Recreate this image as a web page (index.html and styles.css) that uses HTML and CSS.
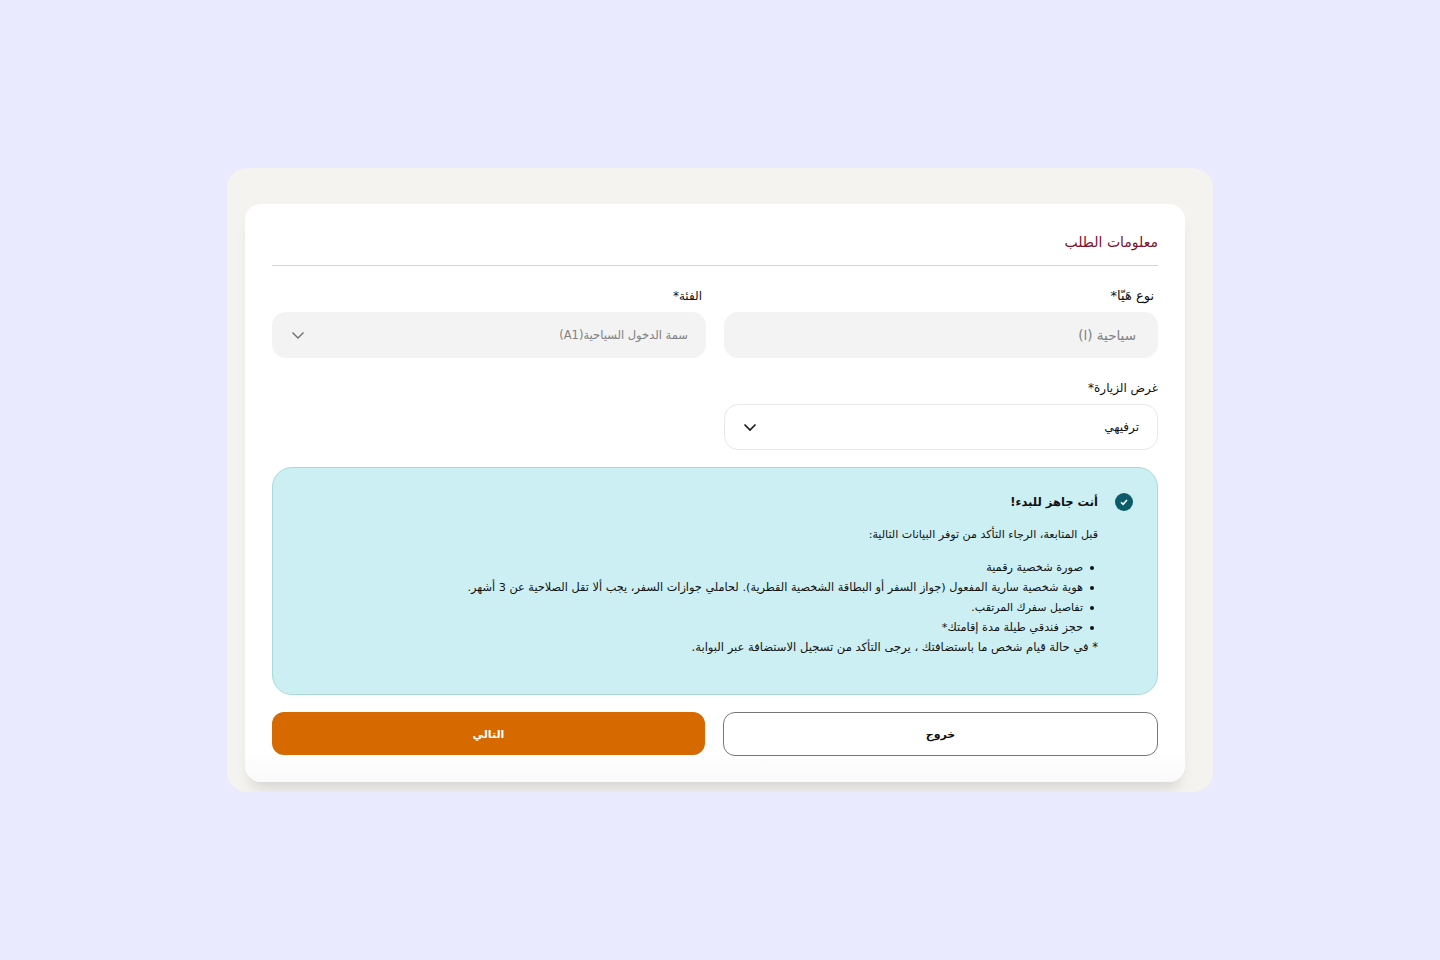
FILE: index.html
```html
<!DOCTYPE html>
<html lang="ar" dir="rtl">
<head>
    <meta charset="UTF-8">
    <meta name="viewport" content="width=device-width, initial-scale=1.0">
    <title>معلومات الطلب</title>
    <link rel="stylesheet" href="styles.css">
</head>
<body>
    <div class="outer-card">
        <div class="form-card">
            <h1 class="section-title">معلومات الطلب</h1>

            <div class="field-grid">
                <div class="field">
                    <label class="field-label label-inset label-wide">نوع هَيّا*</label>
                    <div class="input input-disabled input-type"><span>سياحية (ا)</span></div>
                </div>
                <div class="field">
                    <label class="field-label label-inset">الفئة*</label>
                    <div class="input input-disabled input-category">
                        <span>سمة الدخول السياحية(A1)</span>
                        <svg class="chevron" width="14" height="14" viewBox="0 0 14 14"><path d="M1.5 4.5 7 10l5.5-5.5" fill="none" stroke="#6f6f6f" stroke-width="1.4"/></svg>
                    </div>
                </div>
                <div class="field">
                    <label class="field-label">غرض الزيارة*</label>
                    <div class="input input-active">
                        <span>ترفيهي</span>
                        <svg class="chevron" width="14" height="14" viewBox="0 0 14 14"><path d="M1.5 4.5 7 10l5.5-5.5" fill="none" stroke="#1c1c1c" stroke-width="1.7"/></svg>
                    </div>
                </div>
            </div>

            <div class="notice">
                <div class="notice-head">
                    <svg class="notice-icon" width="18" height="18" viewBox="0 0 18 18"><circle cx="9" cy="9" r="9" fill="#0b5c68"/><path d="M6 9.2 8.1 11.3 12 7" fill="none" stroke="#fff" stroke-width="1.5"/></svg>
                    <h2 class="notice-title">أنت جاهز للبدء!</h2>
                </div>
                <div class="notice-body">
                    <p class="notice-intro">قبل المتابعة، الرجاء التأكد من توفر البيانات التالية:</p>
                    <ul class="notice-list">
                        <li>صورة شخصية رقمية</li>
                        <li>هوية شخصية سارية المفعول (جواز السفر أو البطاقة الشخصية القطرية). لحاملي جوازات السفر، يجب ألا تقل الصلاحية عن 3 أشهر.</li>
                        <li class="item-tight">تفاصيل سفرك المرتقب.</li>
                        <li>حجز فندقي طيلة مدة إقامتك*</li>
                    </ul>
                    <p class="notice-foot">* في حالة قيام شخص ما باستضافتك ، يرجى التأكد من تسجيل الاستضافة عبر البوابة.</p>
                </div>
            </div>

            <div class="actions">
                <div class="button button-outline">خروج</div>
                <div class="button button-primary">التالي</div>
            </div>
        </div>
    </div>
</body>
</html>
```

FILE: styles.css
```css
* {
    margin: 0;
    padding: 0;
    box-sizing: border-box;
    font-family: 'DejaVu Sans', 'Noto Sans', sans-serif;
}

body {
    background-color: #E9EAFE;
    height: 100vh;
    display: flex;
    align-items: center;
    justify-content: center;
    overflow: hidden;
}

.outer-card {
    width: 986px;
    height: 624px;
    padding: 36px 28px 10px 18px;
    background-color: #F5F3F0;
    border-radius: 20px;
    overflow: hidden;
}

.form-card {
    height: 578px;
    padding: 27px 27px 0;
    background: linear-gradient(to bottom, #fff 94%, #FAFAFA 100%);
    border-radius: 16px;
    box-shadow: 0 12px 14px -6px rgba(90, 88, 90, 0.2);
}

.section-title {
    height: 35px;
    border-bottom: 1px solid #D6D6D6;
    color: #7A1230;
    font-size: 14px;
    font-weight: normal;
    line-height: 22px;
}

.field-grid {
    display: grid;
    grid-template-columns: 434px 434px;
    column-gap: 18px;
    row-gap: 20px;
    margin-top: 20px;
}

.field-label {
    display: block;
    height: 26px;
    font-size: 12px;
    line-height: 20px;
    color: #111;
}

.label-inset {
    padding-right: 4px;
}

.label-wide {
    font-size: 13px;
}

.input {
    height: 46px;
    border-radius: 14px;
    display: flex;
    align-items: center;
    justify-content: space-between;
    font-size: 12px;
}

.input-disabled {
    background-color: #F3F3F3;
    color: #808080;
}

.input-type {
    padding: 0 22px 0 18px;
    font-size: 13.5px;
}

.input-category {
    padding: 0 18px 0 19px;
    font-size: 11.5px;
}

.input-active {
    background-color: #fff;
    border: 1px solid #E8E8E8;
    color: #111;
    padding: 0 18px;
}

.notice {
    height: 228px;
    margin-top: 17px;
    padding: 24px 24px 0;
    background-color: #CCEFF3;
    border: 1px solid #A8DADA;
    border-radius: 20px;
}

.notice-head {
    display: flex;
    align-items: center;
    gap: 17px;
}

.notice-title {
    font-size: 11.5px;
    font-weight: bold;
    line-height: 20px;
    color: #111;
}

.notice-body {
    padding-right: 35px;
    color: #111;
}

.notice-intro {
    margin-top: 13px;
    font-size: 11.1px;
    line-height: 20px;
}

.notice-list {
    list-style: none;
    margin-top: 12.5px;
    padding-right: 4px;
    font-size: 11.3px;
    line-height: 20.2px;
}

.notice-list li {
    display: flex;
    align-items: center;
    gap: 7px;
}

.notice-list li::before {
    content: "";
    width: 4px;
    height: 4px;
    border-radius: 50%;
    background-color: #111;
}

.notice-list .item-tight {
    font-size: 11px;
}

.notice-foot {
    margin-top: -1px;
    font-size: 11.55px;
    line-height: 20px;
}

.actions {
    display: grid;
    grid-template-columns: 435px 433px;
    column-gap: 18px;
    margin-top: 17px;
}

.button {
    height: 44px;
    border-radius: 12px;
    display: flex;
    align-items: center;
    justify-content: center;
    font-size: 11px;
    font-weight: bold;
}

.button-outline {
    background-color: #fff;
    border: 1px solid #77777B;
    color: #111;
}

.button-primary {
    height: 43px;
    padding-top: 1px;
    background-color: #D66A00;
    color: #fff;
}
```
